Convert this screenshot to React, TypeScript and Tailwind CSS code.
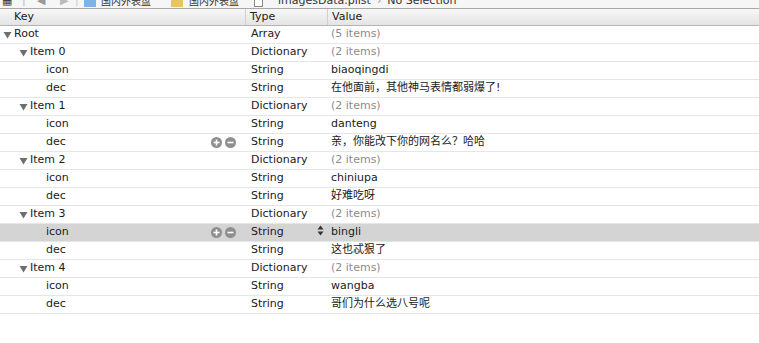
import { Fragment } from 'react';

type Row = {
    key: string;
    type: string;
    value: string;
    depth: number;
    expandable?: boolean;
    muted?: boolean;
    buttons?: boolean;
    selected?: boolean;
};

const rows: Row[] = [
    { key: 'Root', type: 'Array', value: '(5 items)', depth: 0, expandable: true, muted: true },
    { key: 'Item 0', type: 'Dictionary', value: '(2 items)', depth: 1, expandable: true, muted: true },
    { key: 'icon', type: 'String', value: 'biaoqingdi', depth: 2 },
    { key: 'dec', type: 'String', value: '在他面前，其他神马表情都弱爆了!', depth: 2 },
    { key: 'Item 1', type: 'Dictionary', value: '(2 items)', depth: 1, expandable: true, muted: true },
    { key: 'icon', type: 'String', value: 'danteng', depth: 2 },
    { key: 'dec', type: 'String', value: '亲，你能改下你的网名么？哈哈', depth: 2, buttons: true },
    { key: 'Item 2', type: 'Dictionary', value: '(2 items)', depth: 1, expandable: true, muted: true },
    { key: 'icon', type: 'String', value: 'chiniupa', depth: 2 },
    { key: 'dec', type: 'String', value: '好难吃呀', depth: 2 },
    { key: 'Item 3', type: 'Dictionary', value: '(2 items)', depth: 1, expandable: true, muted: true },
    { key: 'icon', type: 'String', value: 'bingli', depth: 2, buttons: true, selected: true },
    { key: 'dec', type: 'String', value: '这也忒狠了', depth: 2 },
    { key: 'Item 4', type: 'Dictionary', value: '(2 items)', depth: 1, expandable: true, muted: true },
    { key: 'icon', type: 'String', value: 'wangba', depth: 2 },
    { key: 'dec', type: 'String', value: '哥们为什么选八号呢', depth: 2 },
];

const indent = ['pl-[3px]', 'pl-[19px]', 'pl-[46px]'];

function RoundButton({ minus }: { minus?: boolean }) {
    return (
        <span className="flex h-[11px] w-[11px] items-center justify-center rounded-full bg-[#8f8f8f]">
            <svg width="7" height="7" viewBox="0 0 7 7">
                <rect x="0.5" y="2.7" width="6" height="1.6" fill="#fff" />
                {!minus && <rect x="2.7" y="0.5" width="1.6" height="6" fill="#fff" />}
            </svg>
        </span>
    );
}

function Disclosure() {
    return (
        <svg width="9" height="8" viewBox="0 0 9 8" className="mr-[2px] shrink-0">
            <path d="M0.5 1 L8.5 1 L4.5 7.5 Z" fill="#6e6e6e" />
        </svg>
    );
}

export default function App() {
    return (
        <div className="h-[343px] w-[759px] overflow-hidden bg-white font-['DejaVu_Sans','Noto_Sans_CJK_SC',sans-serif] text-[11px] text-[#1a1a1a]">
            {/* jump bar, mostly scrolled out of view */}
            <div className="h-[9px] overflow-hidden border-b border-[#a8a8a8] bg-[#f6f6f6]">
                <div className="-mt-[7px] flex h-[16px] items-center whitespace-nowrap pl-[2px] text-[11px] text-[#333]">
                    <span className="w-[20px]">▦</span>
                    <span className="w-[15px] text-[#bbb]">|</span>
                    <span className="w-[23px] text-[#999]">◀</span>
                    <span className="w-[15px] text-[#bbb]">▶</span>
                    <span className="w-[9px] text-[#ccc]">|</span>
                    <span className="mr-[5px] h-[12px] w-[12px] bg-[#7fb3e8]" />
                    <span className="w-[70px] text-[10px]">国内外表盘</span>
                    <span className="h-[12px] w-[12px] bg-[#e8c65a]" />
                    <span className="ml-[6px] w-[65px] text-[10px]">国内外表盘</span>
                    <span className="mr-[15px] h-[12px] w-[9px] border border-[#888] bg-white" />
                    <span>imagesData.plist</span>
                    <span className="mx-[6px] text-[#999]">›</span>
                    <span>No Selection</span>
                </div>
            </div>

            {/* column header */}
            <div className="flex h-[17px] items-center border-b border-[#b4b4b4] bg-gradient-to-b from-[#f7f7f7] to-[#e4e4e4] text-[#222]">
                <div className="w-[245px] pl-[14px]">Key</div>
                <div className="h-full w-[82px] border-l border-[#cfcfcf] pl-[4px] leading-[16px]">Type</div>
                <div className="h-full flex-1 border-l border-[#cfcfcf] pl-[4px] leading-[16px]">Value</div>
            </div>

            {rows.map((row, i) => (
                <Fragment key={i}>
                    <div
                        className={`flex h-[18px] items-center border-b border-[#e6e6e6] ${row.selected ? 'bg-[#d4d4d4]' : 'bg-white'}`}
                    >
                        <div className={`flex w-[245px] items-center ${indent[row.depth]}`}>
                            {row.expandable && <Disclosure />}
                            <span>{row.key}</span>
                            {row.buttons && (
                                <span className="ml-auto mr-[9px] flex gap-[3px]">
                                    <RoundButton />
                                    <RoundButton minus />
                                </span>
                            )}
                        </div>
                        <div className="relative w-[82px] pl-[6px]">
                            {row.type}
                            {row.selected && (
                                <svg width="7" height="11" viewBox="0 0 7 11" className="absolute right-[3px] top-[1px]">
                                    <path d="M3.5 0.5 L6.5 4.5 L0.5 4.5 Z" fill="#333" />
                                    <path d="M3.5 10.5 L6.5 6.5 L0.5 6.5 Z" fill="#333" />
                                </svg>
                            )}
                        </div>
                        <div className={`flex-1 pl-[4px] ${row.muted ? 'text-[#8c8c8c]' : ''}`}>{row.value}</div>
                    </div>
                </Fragment>
            ))}
        </div>
    );
}
